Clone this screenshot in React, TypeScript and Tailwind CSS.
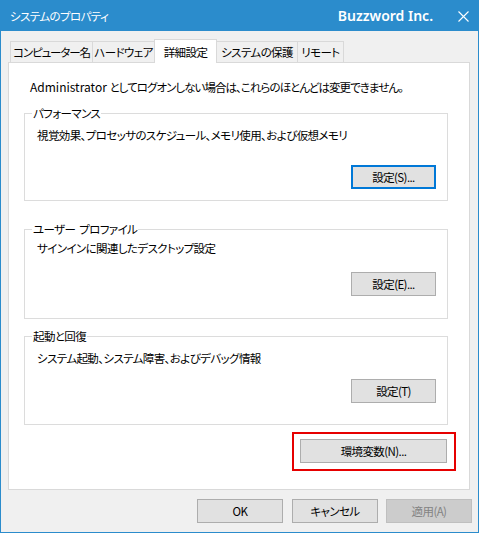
import React from 'react'

const font = "[font-family:'Noto_Sans_CJK_JP','Noto_Sans',sans-serif] [font-feature-settings:'palt']"
const jp = 'text-[11.5px] leading-[16px] tracking-[-0.6px] whitespace-nowrap'

function Btn({
  label,
  width = 'w-[85px]',
  focused = false,
  disabled = false,
}: {
  label: string
  width?: string
  focused?: boolean
  disabled?: boolean
}) {
  let cls = 'border border-[#adadad] bg-[#e1e1e1] text-black'
  if (focused) cls = 'border-2 border-[#0078d7] bg-[#e1e1e1] text-black'
  if (disabled) cls = 'border border-[#bfbfbf] bg-[#cccccc] text-[#838383]'
  return (
    <div className={`${width} h-[24px] flex items-center justify-center ${jp} ${cls}`}>
      {label}
    </div>
  )
}

function Group({
  title,
  text,
  button,
  className,
  textPad,
  btnGap,
  focused,
}: {
  title: React.ReactNode
  text: string
  button: string
  className: string
  textPad: string
  btnGap: string
  focused?: boolean
}) {
  return (
    <div className={`relative w-[424px] border border-[#dcdcdc] ${className}`}>
      <span className={`absolute -top-[9px] left-[7px] bg-white px-[1px] text-black ${jp}`}>
        {title}
      </span>
      <div className={`pl-[12px] text-black ${jp} ${textPad}`}>{text}</div>
      <div className={`flex justify-end pr-[11px] ${btnGap}`}>
        <Btn label={button} focused={focused} />
      </div>
    </div>
  )
}

const tabs = [
  { label: 'コンピューター名', w: 'w-[83px]', tight: true },
  { label: 'ハードウェア', w: 'w-[63px]' },
  { label: '詳細設定', w: 'w-[63px]', active: true },
  { label: 'システムの保護', w: 'w-[82px]' },
  { label: 'リモート', w: 'w-[47px]' },
]

export default function App() {
  return (
    <div className={`w-[479px] h-[533px] bg-[#f0f0f0] border border-[#2b8ccc] flex flex-col ${font}`}>
      {/* title bar */}
      <div className="h-[30px] bg-[#2b8ccc] flex items-center pl-[9px] pr-[9px] text-white">
        <span className={jp}>システムのプロパティ</span>
        <span className="ml-auto text-[14px] leading-[20px] font-semibold [font-family:'Noto_Sans',sans-serif]">
          Buzzword Inc.
        </span>
        <svg className="ml-[25px]" width="11" height="11" viewBox="0 0 11 11">
          <path d="M0.5 0.5 L10.5 10.5 M10.5 0.5 L0.5 10.5" stroke="white" strokeWidth="1.1" />
        </svg>
      </div>

      <div className="pl-[7px] pt-[8px]">
        {/* tabs */}
        <div className="flex items-end h-[23px] pl-[2px]">
          {tabs.map((t, i) => (
            <div
              key={t.label}
              className={`${t.w} ${i > 0 ? '-ml-px' : ''} border border-b-0 border-[#d9d9d9] flex items-center justify-center text-black ${jp} ${
                t.tight ? 'tracking-[-1.1px]' : ''
              } ${t.active ? 'relative z-10 h-[24px] -mb-px bg-white' : 'h-[21px] bg-[#f0f0f0]'}`}
            >
              {t.label}
            </div>
          ))}
        </div>

        {/* panel */}
        <div className="w-[462px] h-[428px] border border-[#d9d9d9] bg-white pl-[15px] pt-[16px]">
          <div className={`ml-[6px] text-black ${jp} tracking-[-0.95px]`}>
            <span className="text-[12px] tracking-normal">Administrator </span>
            としてログオンしない場合は、これらのほとんどは変更できません。
          </div>

          <Group
            title="パフォーマンス"
            text="視覚効果、プロセッサのスケジュール、メモリ使用、および仮想メモリ"
            button="設定(S)..."
            className="mt-[18px] h-[88px]"
            textPad="pt-[13px]"
            btnGap="mt-[22px]"
            focused
          />
          <Group
            title={<>ユーザー<span className="inline-block w-[4px]" />プロファイル</>}
            text="サインインに関連したデスクトップ設定"
            button="設定(E)..."
            className="mt-[28px] h-[90px]"
            textPad="pt-[10px]"
            btnGap="mt-[16px]"
          />
          <Group
            title="起動と回復"
            text="システム起動、システム障害、およびデバッグ情報"
            button="設定(T)"
            className="mt-[17px] h-[89px]"
            textPad="pt-[13px]"
            btnGap="mt-[13px]"
          />

          <div className="flex justify-end pr-[13px] mt-[7px]">
            <div className="border-2 border-[#e60000] pl-[6px] pr-[7px] pt-[5px] pb-[6px]">
              <Btn label="環境変数(N)..." width="w-[147px]" />
            </div>
          </div>
        </div>

        {/* dialog buttons */}
        <div className="flex justify-end pr-[6px] mt-[9px]">
          <Btn label="OK" width="w-[86px]" />
          <div className="ml-[9px]">
            <Btn label="キャンセル" width="w-[86px]" />
          </div>
          <div className="ml-[8px]">
            <Btn label="適用(A)" width="w-[86px]" disabled />
          </div>
        </div>
      </div>
    </div>
  )
}
